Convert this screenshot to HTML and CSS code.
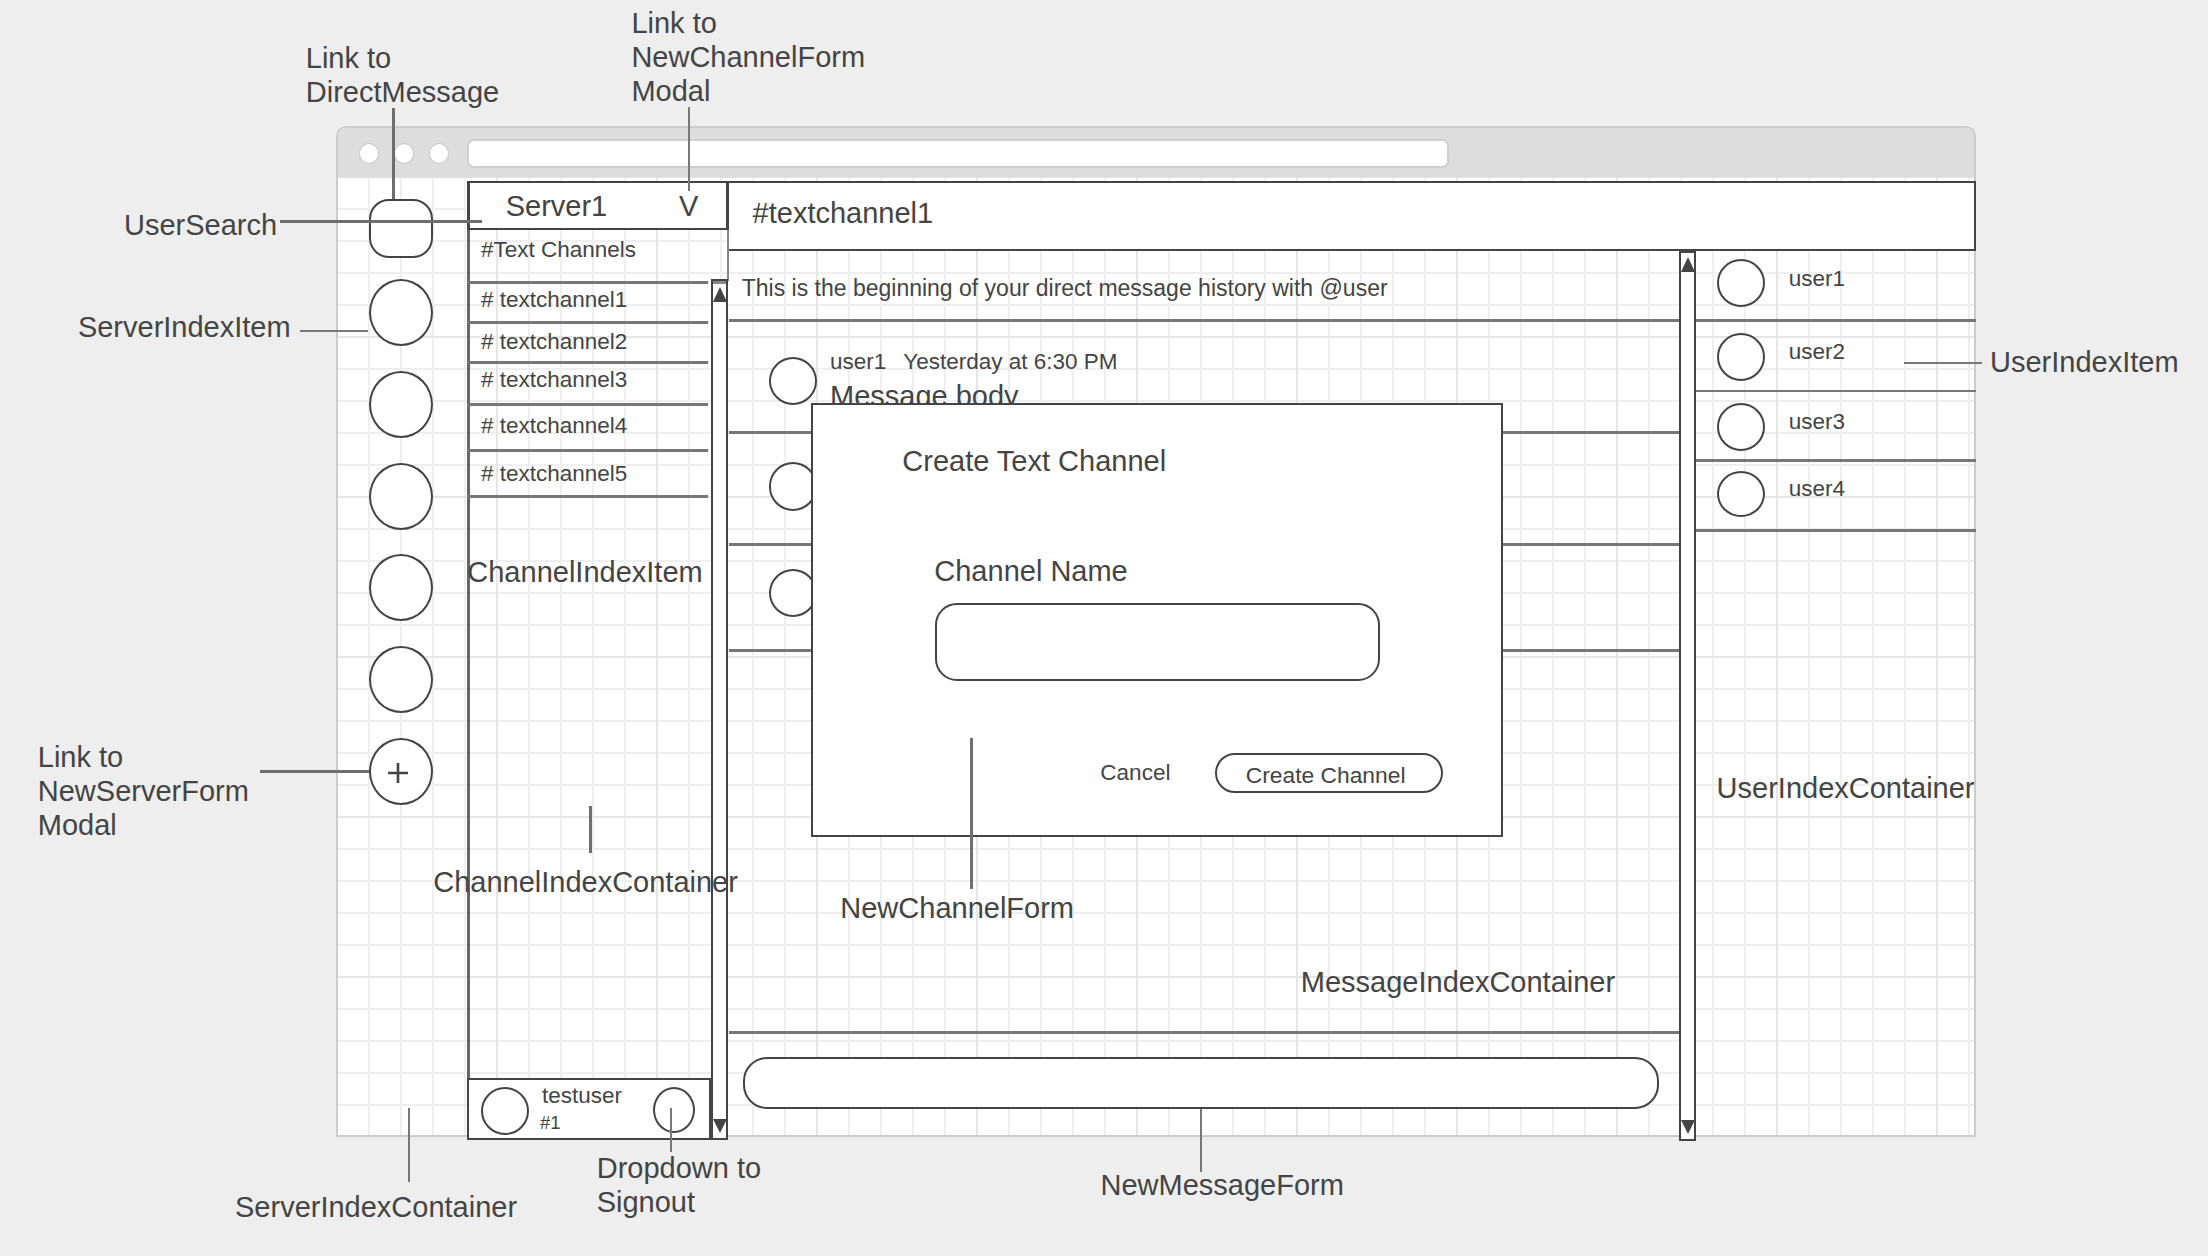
FILE: index.html
```html
<!DOCTYPE html>
<html lang="en">
<head>
<meta charset="utf-8">
<title>Wireframe</title>
<link rel="stylesheet" href="styles.css">
</head>
<body>
<div class="stage">
  <div class="frame">
    <div class="titlebar">
      <span class="dot"></span><span class="dot"></span><span class="dot"></span>
      <div class="address"></div>
    </div>
    <div class="content">
      <div class="servers">
        <div class="user-search"></div>
        <div class="server"></div>
        <div class="server"></div>
        <div class="server"></div>
        <div class="server"></div>
        <div class="server"></div>
        <div class="server add">
          <svg class="plus" width="22" height="22" viewBox="0 0 22 22"><path d="M11 1V21M1 11H21" stroke="#444" stroke-width="2.6" fill="none"/></svg>
        </div>
      </div>
      <div class="channels">
        <div class="server-head"><span>Server1</span><span>V</span></div>
        <div class="textch-head">#Text Channels</div>
        <div class="chan-body">
          <div class="chan-left">
            <div class="chan-list">
              <div class="chan"># textchannel1</div>
              <div class="chan"># textchannel2</div>
              <div class="chan"># textchannel3</div>
              <div class="chan"># textchannel4</div>
              <div class="chan"># textchannel5</div>
            </div>
            <div class="me-panel">
              <div class="me-av"></div>
              <div class="me-text">
                <div class="me-name">testuser</div>
                <div class="me-tag">#1</div>
              </div>
              <div class="me-dd"></div>
            </div>
          </div>
          <div class="vscroll chan-scroll"><span class="arrow up"></span><span class="arrow down"></span></div>
        </div>
      </div>
      <div class="main">
        <div class="main-head">#textchannel1</div>
        <div class="main-body">
          <div class="messages">
            <div class="msg-list">
              <div class="intro">This is the beginning of your direct message history with @user</div>
              <div class="msg">
                <div class="av"></div>
                <div class="msg-text">
                  <div class="meta"><span>user1</span><span>Yesterday at 6:30 PM</span></div>
                  <div class="msg-body">Message body</div>
                </div>
              </div>
              <div class="msg"><div class="av"></div></div>
              <div class="msg"><div class="av"></div></div>
            </div>
            <div class="msg-form"><div class="msg-input"></div></div>
          </div>
          <div class="vscroll msg-scroll"><span class="arrow up"></span><span class="arrow down"></span></div>
          <div class="users">
            <div class="user"><div class="av"></div><div class="name">user1</div></div>
            <div class="user"><div class="av"></div><div class="name">user2</div></div>
            <div class="user"><div class="av"></div><div class="name">user3</div></div>
            <div class="user"><div class="av"></div><div class="name">user4</div></div>
          </div>
        </div>
      </div>
      <div class="modal">
        <div class="modal-title">Create Text Channel</div>
        <div class="field">
          <div class="field-label">Channel Name</div>
          <div class="field-input"></div>
        </div>
        <div class="modal-foot">
          <span class="cancel">Cancel</span>
          <span class="create-btn">Create Channel</span>
        </div>
      </div>
    </div>
  </div>

  <div class="notes">
    <div class="lead thick l-dm"></div>
    <div class="lead l-ncf"></div>
    <div class="lead thick l-us"></div>
    <div class="lead l-sii"></div>
    <div class="lead thick l-nsf"></div>
    <div class="lead thick l-cic"></div>
    <div class="lead thick l-ncform"></div>
    <div class="lead l-nmf"></div>
    <div class="lead l-uii"></div>
    <div class="lead l-dd"></div>
    <div class="lead l-sic"></div>

    <div class="note n-dm">Link to<br>DirectMessage</div>
    <div class="note n-ncf">Link to<br>NewChannelForm<br>Modal</div>
    <div class="note n-us">UserSearch</div>
    <div class="note n-sii">ServerIndexItem</div>
    <div class="note n-nsf">Link to<br>NewServerForm<br>Modal</div>
    <div class="note n-cii">ChannelIndexItem</div>
    <div class="note n-cic">ChannelIndexContainer</div>
    <div class="note n-ncform">NewChannelForm</div>
    <div class="note n-mic">MessageIndexContainer</div>
    <div class="note n-uic">UserIndexContainer</div>
    <div class="note n-uii">UserIndexItem</div>
    <div class="note n-nmf">NewMessageForm</div>
    <div class="note n-dd">Dropdown to<br>Signout</div>
    <div class="note n-sic">ServerIndexContainer</div>
  </div>
</div>
</body>
</html>
```

FILE: styles.css
```css
* { box-sizing: border-box; }

body {
  margin: 0;
  background: #eeeeee;
  font-family: "Liberation Sans", Arial, sans-serif;
  color: #444444;
}

.stage {
  position: relative;
  width: 2208px;
  height: 1256px;
  padding: 126px 0 0 336px;
  overflow: hidden;
  background: #eeeeee;
}

/* ---------- browser frame ---------- */
.frame {
  width: 1640px;
  height: 1011px;
  border: 2px solid #cccccc;
  border-radius: 10px 10px 0 0;
  background: #ffffff;
}

.titlebar {
  height: 50px;
  background: #dddddd;
  border-radius: 8px 8px 0 0;
  display: flex;
  align-items: center;
  padding-left: 21px;
}

.dot {
  flex: none;
  width: 20px;
  height: 21px;
  border-radius: 50%;
  background: #ffffff;
  border: 1.5px solid #c9c9c9;
}
.dot + .dot { margin-left: 15px; }

.address {
  flex: none;
  width: 982px;
  height: 29px;
  margin-left: 18px;
  background: #ffffff;
  border: 2px solid #cfcfcf;
  border-radius: 7px;
}

.content {
  position: relative;
  height: 957px;
  display: flex;
  align-items: flex-start;
  background-color: #ffffff;
  background-image:
    linear-gradient(to right, #e6e6e6 2px, transparent 2px),
    linear-gradient(to bottom, #e6e6e6 2px, transparent 2px),
    linear-gradient(to right, #efefef 2px, transparent 2px),
    linear-gradient(to bottom, #efefef 2px, transparent 2px);
  background-size: 160px 160px, 160px 160px, 32px 32px, 32px 32px;
  background-position: 158px 0, 0 158px, 30px 0, 0 30px;
}

/* ---------- server column ---------- */
.servers {
  flex: none;
  width: 129px;
  padding: 21px 0 0 31px;
  display: flex;
  flex-direction: column;
}

.user-search {
  width: 64px;
  height: 59px;
  border: 2px solid #444444;
  border-radius: 20px;
  background: #ffffff;
}

.server {
  width: 64px;
  height: 67px;
  margin-top: 24.8px;
  border: 2px solid #444444;
  border-radius: 50%;
  background: #ffffff;
}
.user-search + .server { margin-top: 21px; }

.server.add {
  display: flex;
  align-items: center;
  justify-content: center;
}
.plus { margin: 3px 7px 0 0; }

/* ---------- channel column ---------- */
.channels {
  flex: none;
  width: 262px;
  padding-top: 3px;
  display: flex;
  flex-direction: column;
}

.server-head {
  height: 49px;
  border-top: 2px solid #444444;
  border-bottom: 2px solid #444444;
  border-left: 3px solid #444444;
  border-right: 3px solid #444444;
  background: #ffffff;
  display: flex;
  justify-content: space-between;
  padding: 9.2px 27.7px 0 35.7px;
  font-size: 29px;
  line-height: 29px;
}

.textch-head {
  height: 51px;
  border-left: 3px solid #666666;
  border-right: 2px solid #888888;
  padding: 8.7px 0 0 11px;
  font-size: 22.5px;
  line-height: 1;
}

.chan-body {
  height: 859px;
  display: flex;
}

.chan-left {
  flex: none;
  width: 244px;
  display: flex;
  flex-direction: column;
}

.chan-list {
  flex: 1;
  border-left: 3px solid #666666;
}

.chan {
  margin: 0 3px 0 -3px;
  border-bottom: 3px solid #777777;
  padding-left: 14px;
  font-size: 22.5px;
  line-height: 1;
  white-space: pre;
}
.chan:nth-child(1) { border-top: 3px solid #777777; height: 43px; padding-top: 5px; }
.chan:nth-child(2) { height: 40px; padding-top: 7px; }
.chan:nth-child(3) { height: 42px; padding-top: 4.7px; }
.chan:nth-child(4) { height: 46px; padding-top: 8.7px; }
.chan:nth-child(5) { height: 46px; padding-top: 10.7px; }

.me-panel {
  flex: none;
  height: 62px;
  border: 2px solid #444444;
  background: #ffffff;
  display: flex;
  align-items: flex-start;
  padding: 7px 14px 0 12px;
}

.me-av {
  flex: none;
  width: 48px;
  height: 48px;
  border: 2px solid #444444;
  border-radius: 50%;
}

.me-text {
  flex: 1;
  margin: -2px 0 0 11px;
}
.me-name { font-size: 22.5px; line-height: 1; margin-left: 2px; }
.me-tag { font-size: 18.5px; line-height: 1; margin-top: 6.8px; }

.me-dd {
  flex: none;
  width: 42px;
  height: 46px;
  border: 2px solid #444444;
  border-radius: 50%;
}

/* ---------- scrollbars ---------- */
.vscroll {
  flex: none;
  width: 17px;
  border: 2px solid #444444;
  background: #ffffff;
  display: flex;
  flex-direction: column;
  justify-content: space-between;
  align-items: center;
}

.chan-scroll {
  height: 861px;
  margin-top: -2px;
  padding: 5.7px 0 5.3px;
  box-shadow: inset 0 3px 0 #888888;
}

.msg-scroll {
  height: 890px;
  padding: 3.7px 0 5px;
}

.arrow {
  width: 0;
  height: 0;
  margin: 0 -1px;
  border-left: 7px solid transparent;
  border-right: 7px solid transparent;
}
.arrow.up { border-bottom: 15px solid #444444; }
.arrow.down { border-top: 14.5px solid #444444; }

/* ---------- main column ---------- */
.main {
  flex: 1;
  padding-top: 3px;
  display: flex;
  flex-direction: column;
}

.main-head {
  height: 70px;
  margin-right: -2px;
  border-top: 2px solid #444444;
  border-right: 2px solid #444444;
  border-bottom: 2px solid #444444;
  background: #ffffff;
  padding: 15.5px 0 0 23.6px;
  font-size: 29px;
  line-height: 1;
}

.main-body {
  height: 890px;
  display: flex;
  align-items: flex-start;
}

.messages {
  flex: none;
  width: 950px;
  display: flex;
  flex-direction: column;
}

.msg-list {
  height: 782.5px;
  border-bottom: 3px solid #777777;
}

.intro {
  height: 70.5px;
  border-bottom: 3px solid #777777;
  padding: 25.5px 0 0 12.7px;
  font-size: 23px;
  line-height: 1;
  white-space: nowrap;
}

.msg {
  display: flex;
  align-items: flex-start;
  padding-left: 39.7px;
  border-bottom: 3px solid #777777;
}
.msg:nth-child(2) { height: 112px; }
.msg:nth-child(3) { height: 112px; }
.msg:nth-child(4) { height: 106px; }

.msg .av {
  flex: none;
  width: 48.6px;
  height: 48.3px;
  border: 2px solid #444444;
  border-radius: 50%;
  background: #ffffff;
}
.msg:nth-child(2) .av { margin-top: 35.2px; }
.msg:nth-child(3) .av { margin-top: 28.8px; }
.msg:nth-child(4) .av { margin-top: 23.2px; }

.msg-text {
  margin-left: 12.7px;
  padding-top: 29.5px;
}

.meta {
  display: flex;
  gap: 17px;
  font-size: 22.5px;
  line-height: 1;
  white-space: nowrap;
}

.msg-body {
  margin-top: 8px;
  font-size: 29px;
  line-height: 1;
  white-space: nowrap;
}

.msg-form {
  padding: 23.2px 20.5px 0 13.7px;
}

.msg-input {
  height: 52.3px;
  border: 2px solid #444444;
  border-radius: 24px;
  background: #ffffff;
}

/* ---------- user column ---------- */
.users {
  flex: none;
  width: 278px;
  display: flex;
  flex-direction: column;
}

.user {
  margin-right: -2px;
  display: flex;
  align-items: flex-start;
  padding-left: 20.7px;
  border-bottom: 3px solid #777777;
}
.user:nth-child(1) { height: 70.5px; }
.user:nth-child(2) { height: 70.5px; border-bottom-width: 2px; }
.user:nth-child(3) { height: 69.5px; }
.user:nth-child(4) { height: 70px; }

.user .av {
  flex: none;
  width: 48.6px;
  height: 48.6px;
  border: 2px solid #444444;
  border-radius: 50%;
  background: #ffffff;
}
.user:nth-child(1) .av { margin-top: 7.7px; }
.user:nth-child(2) .av { margin-top: 11.2px; }
.user:nth-child(3) .av { margin-top: 10.7px; }
.user:nth-child(4) .av { margin-top: 9.2px; height: 46.6px; }

.user .name {
  margin-left: 23.4px;
  font-size: 22.5px;
  line-height: 1;
}
.user:nth-child(1) .name { margin-top: 16.6px; }
.user:nth-child(2) .name { margin-top: 19.5px; }
.user:nth-child(3) .name { margin-top: 19px; }
.user:nth-child(4) .name { margin-top: 16.8px; }

/* ---------- modal ---------- */
.modal {
  position: absolute;
  left: 473px;
  top: 225px;
  width: 692px;
  height: 434px;
  border: 2px solid #444444;
  background: #ffffff;
  padding: 42.2px 0 0 89.3px;
}

.modal-title {
  font-size: 29px;
  line-height: 1;
  white-space: nowrap;
}

.field { margin: 81px 0 0 32px; }

.field-label {
  font-size: 29px;
  line-height: 1;
}

.field-input {
  width: 445px;
  height: 78px;
  margin: 16.8px 0 0 0.7px;
  border: 2px solid #444444;
  border-radius: 22px;
}

.modal-foot {
  display: flex;
  align-items: center;
  justify-content: flex-end;
  margin-top: 71.7px;
  padding-right: 58.5px;
}

.cancel {
  margin-right: 44.6px;
  font-size: 22.5px;
  line-height: 1;
}

.create-btn {
  width: 227.5px;
  height: 40.6px;
  border: 2px solid #444444;
  border-radius: 21px;
  padding: 9.3px 0 0 28.8px;
  font-size: 22.8px;
  line-height: 1;
  white-space: nowrap;
}

/* ---------- annotations (diagram canvas) ---------- */
.notes {
  position: absolute;
  left: 0;
  top: 0;
  width: 2208px;
  height: 1256px;
  pointer-events: none;
}

.lead {
  position: absolute;
  background: #787878;
}
.lead.thick { background: #6e6e6e; }

.l-dm { left: 392px; top: 108px; width: 3px; height: 91px; }
.l-ncf { left: 688px; top: 106.7px; width: 2px; height: 84.3px; }
.l-us { left: 280px; top: 220.2px; width: 201.7px; height: 3px; }
.l-sii { left: 300px; top: 330px; width: 68px; height: 2px; }
.l-nsf { left: 260px; top: 770.2px; width: 108.6px; height: 3px; }
.l-cic { left: 588.5px; top: 806px; width: 3px; height: 46.7px; }
.l-ncform { left: 969.5px; top: 738px; width: 3px; height: 151px; }
.l-nmf { left: 1200.3px; top: 1109px; width: 2px; height: 62.7px; }
.l-uii { left: 1904px; top: 361.7px; width: 77.7px; height: 2px; }
.l-dd { left: 669.7px; top: 1108px; width: 2px; height: 43.7px; }
.l-sic { left: 408px; top: 1108px; width: 2px; height: 73.7px; }

.note {
  position: absolute;
  font-size: 29px;
  line-height: 34px;
  white-space: nowrap;
  color: #444444;
}

.n-dm { left: 305.8px; top: 40.6px; }
.n-ncf { left: 631.4px; top: 6.3px; }
.n-us { left: 124px; top: 208px; }
.n-sii { left: 77.9px; top: 310.3px; }
.n-nsf { left: 37.8px; top: 740.3px; }
.n-cii { left: 467.3px; top: 554.6px; }
.n-cic { left: 433.2px; top: 864.6px; }
.n-ncform { left: 840.3px; top: 891px; }
.n-mic { left: 1300.8px; top: 964.6px; }
.n-uic { left: 1716.6px; top: 770.5px; }
.n-uii { left: 1990px; top: 344.6px; }
.n-nmf { left: 1100.5px; top: 1168px; }
.n-dd { left: 596.7px; top: 1151.3px; }
.n-sic { left: 235px; top: 1189.6px; }
```
